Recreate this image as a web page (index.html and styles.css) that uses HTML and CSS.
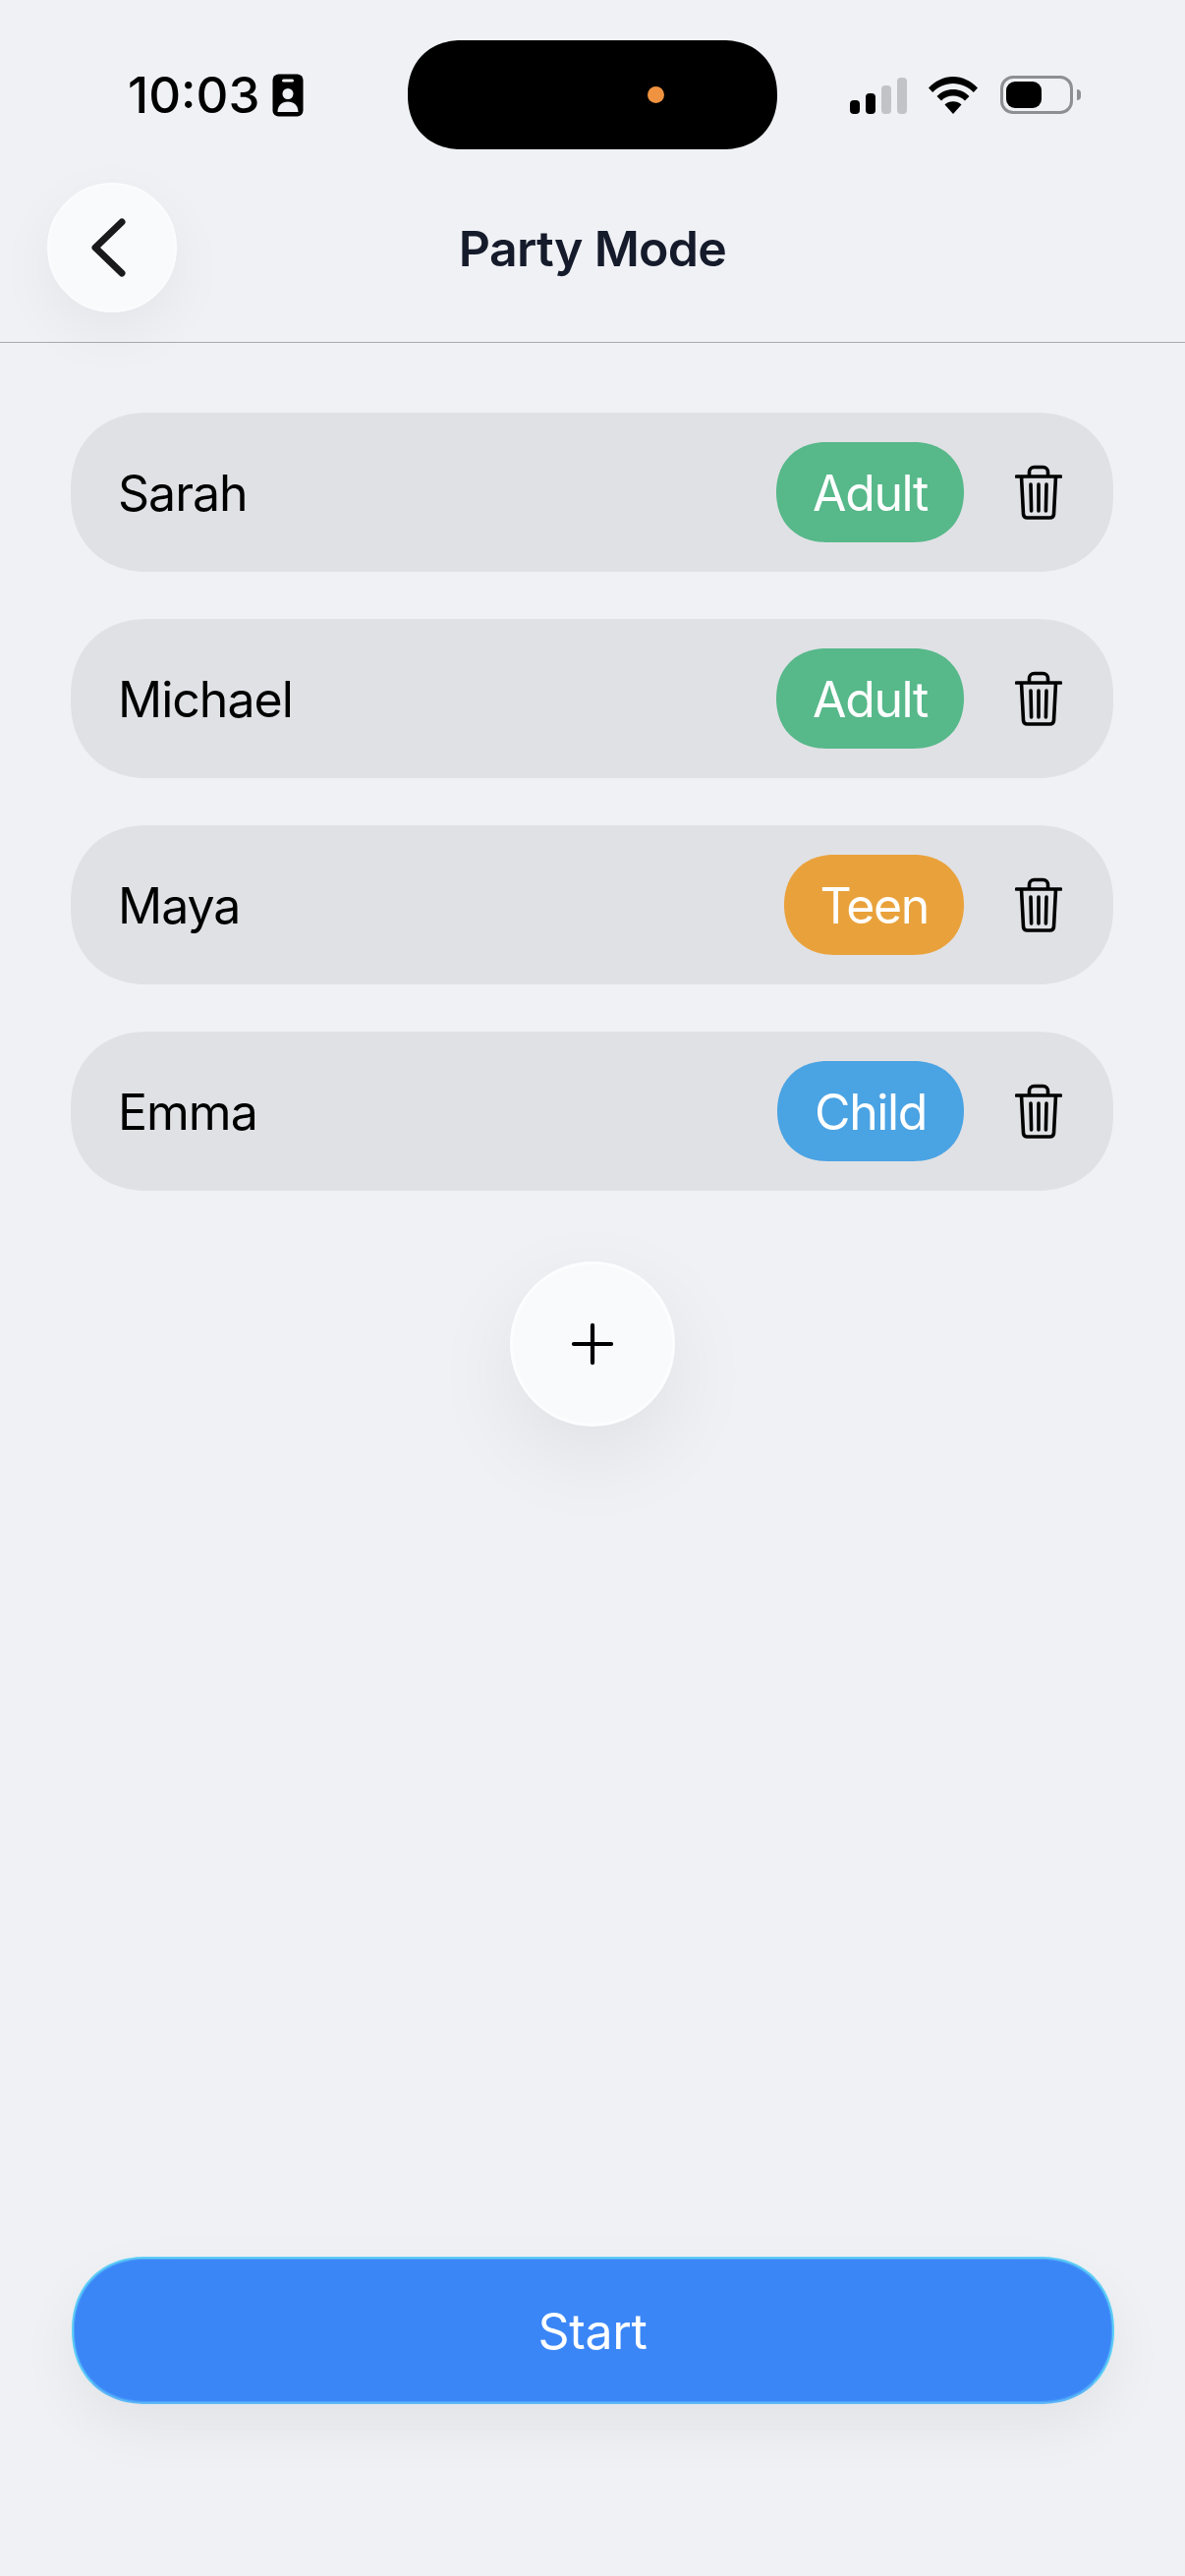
FILE: index.html
```html
<!DOCTYPE html>
<html lang="en">
<head>
    <meta charset="UTF-8">
    <meta name="viewport" content="width=device-width, initial-scale=1.0">
    <title>Party Mode</title>
    <link rel="stylesheet" href="styles.css">
</head>
<body>
    <div class="screen">
        <div class="status-bar">
            <div class="status-left">
                <span class="time">10:03</span>
                <svg class="id-icon" width="32" height="44" viewBox="0 0 32 44">
                    <rect x="0.5" y="0.5" width="31" height="43" rx="6" fill="#000"/>
                    <rect x="10" y="5.500" width="12" height="3" rx="1.500" fill="#eff1f5"/>
                    <circle cx="16" cy="20.500" r="5.500" fill="#eff1f5"/>
                    <path d="M5.500 39c0-6.500 4.500-10.500 10.500-10.500s10.500 4 10.500 10.500z" fill="#eff1f5"/>
                </svg>
            </div>
            <div class="island"><span class="island-dot"></span></div>
            <div class="status-right">
                <div class="signal">
                    <span class="bar bar-1"></span>
                    <span class="bar bar-2"></span>
                    <span class="bar bar-3"></span>
                    <span class="bar bar-4"></span>
                </div>
                <svg class="wifi" width="50" height="38" viewBox="0 0 50 38">
                    <path d="M0 11.500C6.500 4.500 15.500 0 25 0s18.500 4.500 25 11.500L45.800 16C40.500 10.500 33 7 25 7S9.500 10.500 4.200 16z" fill="#000"/>
                    <path d="M8.500 20C12.800 15.500 18.800 13 25 13s12.200 2.500 16.500 7L37 24.500C33.800 21.300 29.500 19.500 25 19.500S16.200 21.300 13 24.500z" fill="#000"/>
                    <path d="M16.500 28.500C18.800 26.500 21.800 25.300 25 25.300s6.200 1.200 8.500 3.200L25 38z" fill="#000"/>
                </svg>
                <div class="battery">
                    <div class="battery-body"><span class="battery-fill"></span></div>
                    <span class="battery-cap"></span>
                </div>
            </div>
        </div>

        <div class="header">
            <div class="header-side">
                <button class="back-btn">
                    <svg width="44" height="64" viewBox="0 0 44 64">
                        <path d="M32 6L5 32l27 26" fill="none" stroke="#1a1a1c" stroke-width="7" stroke-linecap="round" stroke-linejoin="round"/>
                    </svg>
                </button>
            </div>
            <h1 class="title">Party Mode</h1>
            <div class="header-side"></div>
        </div>

        <div class="player-list">
            <div class="player-row">
                <span class="player-name">Sarah</span>
                <span class="badge badge-adult">Adult</span>
                <svg class="trash" width="48" height="56" viewBox="0 0 48 56">
                    <path d="M1.500 12h45M14.500 12V7.500a5 5 0 0 1 5-5h9a5 5 0 0 1 5 5V12M6.500 12l2 38.500a4 4 0 0 0 4 3.500h23a4 4 0 0 0 4-3.500l2-38.500M16 20l.6 27M24 20v27M32 20l-.6 27" fill="none" stroke="#000" stroke-width="3.600" stroke-linecap="round" stroke-linejoin="round"/>
                </svg>
            </div>
            <div class="player-row">
                <span class="player-name">Michael</span>
                <span class="badge badge-adult">Adult</span>
                <svg class="trash" width="48" height="56" viewBox="0 0 48 56">
                    <path d="M1.500 12h45M14.500 12V7.500a5 5 0 0 1 5-5h9a5 5 0 0 1 5 5V12M6.500 12l2 38.500a4 4 0 0 0 4 3.500h23a4 4 0 0 0 4-3.500l2-38.500M16 20l.6 27M24 20v27M32 20l-.6 27" fill="none" stroke="#000" stroke-width="3.600" stroke-linecap="round" stroke-linejoin="round"/>
                </svg>
            </div>
            <div class="player-row">
                <span class="player-name">Maya</span>
                <span class="badge badge-teen">Teen</span>
                <svg class="trash" width="48" height="56" viewBox="0 0 48 56">
                    <path d="M1.500 12h45M14.500 12V7.500a5 5 0 0 1 5-5h9a5 5 0 0 1 5 5V12M6.500 12l2 38.500a4 4 0 0 0 4 3.500h23a4 4 0 0 0 4-3.500l2-38.500M16 20l.6 27M24 20v27M32 20l-.6 27" fill="none" stroke="#000" stroke-width="3.600" stroke-linecap="round" stroke-linejoin="round"/>
                </svg>
            </div>
            <div class="player-row">
                <span class="player-name">Emma</span>
                <span class="badge badge-child">Child</span>
                <svg class="trash" width="48" height="56" viewBox="0 0 48 56">
                    <path d="M1.500 12h45M14.500 12V7.500a5 5 0 0 1 5-5h9a5 5 0 0 1 5 5V12M6.500 12l2 38.500a4 4 0 0 0 4 3.500h23a4 4 0 0 0 4-3.500l2-38.500M16 20l.6 27M24 20v27M32 20l-.6 27" fill="none" stroke="#000" stroke-width="3.600" stroke-linecap="round" stroke-linejoin="round"/>
                </svg>
            </div>
        </div>

        <button class="add-btn">
            <svg width="42" height="42" viewBox="0 0 42 42">
                <path d="M21 2v38M2 21h38" fill="none" stroke="#000" stroke-width="4.200" stroke-linecap="round"/>
            </svg>
        </button>

        <button class="start-btn">Start</button>
    </div>
</body>
</html>
```

FILE: styles.css
```css
* {
    box-sizing: border-box;
}
body {
    margin: 0;
    background-color: #eff1f5;
    font-family: 'Inter', 'Liberation Sans', sans-serif;
}
button {
    font-family: inherit;
    cursor: pointer;
}
.screen {
    display: flex;
    flex-direction: column;
    height: 2622px;
    overflow: hidden;
}

/* status bar */
.status-bar {
    display: grid;
    grid-template-columns: 415px 376px 1fr;
    align-items: center;
    padding-top: 41px;
    height: 152px;
}
.status-left {
    display: flex;
    align-items: center;
    gap: 13px;
    padding-left: 130px;
}
.time {
    font-size: 51px;
    font-weight: 500;
    line-height: 1;
    color: #000;
}
.island {
    display: flex;
    align-items: center;
    height: 111px;
    padding-left: 244px;
    background: #000;
    border-radius: 55px;
    corner-shape: superellipse(1.12);
}
.island-dot {
    width: 17px;
    height: 17px;
    border-radius: 50%;
    background: #f09340;
}
.status-right {
    display: flex;
    align-items: flex-end;
    height: 38px;
    padding-left: 74px;
}
.signal {
    display: flex;
    align-items: flex-end;
    gap: 6px;
    height: 37px;
    margin-right: 22px;
}
.bar {
    width: 10px;
    border-radius: 4px;
    background: #000;
}
.bar-1 { height: 14px; }
.bar-2 { height: 21px; }
.bar-3 { height: 29px; background: #c2c3c6; }
.bar-4 { height: 37px; background: #c2c3c6; }
.wifi {
    margin-right: 23px;
}
.battery {
    display: flex;
    align-items: center;
    gap: 4px;
}
.battery-body {
    width: 74px;
    height: 39px;
    padding: 3px;
    border: 3px solid #8e8f92;
    border-radius: 13px;
}
.battery-fill {
    display: block;
    width: 36px;
    height: 27px;
    border-radius: 9px;
    background: #000;
}
.battery-cap {
    width: 4px;
    height: 11px;
    border-radius: 0 4px 4px 0;
    background: #8e8f92;
}

/* header */
.header {
    display: grid;
    grid-template-columns: 1fr auto 1fr;
    align-items: center;
    padding: 34px 48px 30px;
    border-bottom: 1px solid #aaabae;
}
.back-btn {
    display: flex;
    align-items: center;
    justify-content: center;
    width: 132px;
    height: 132px;
    padding: 0;
    background: #f9fafc;
    border: 2px solid #fbfcfd;
    border-radius: 50%;
    box-shadow: 0 20px 60px rgba(0, 0, 0, 0.05);
}
.title {
    margin: 0;
    padding-top: 2px;
    font-size: 50px;
    font-weight: 600;
    letter-spacing: -0.7px;
    color: #151b2a;
}

/* players */
.player-list {
    display: flex;
    flex-direction: column;
    gap: 48px;
    padding: 71px 73px 0 72px;
}
.player-row {
    display: flex;
    align-items: center;
    height: 162px;
    padding: 0 52px 0 48px;
    background: #e0e1e5;
    border-radius: 78px;
    corner-shape: superellipse(1.12);
}
.player-name {
    flex: 1;
    padding-top: 2px;
    font-size: 50px;
    letter-spacing: -1px;
    color: #000;
}
.badge {
    padding: 2px 37px 0;
    height: 102px;
    line-height: 100px;
    font-size: 50px;
    letter-spacing: -1.4px;
    color: #fff;
    border-radius: 51px;
    corner-shape: superellipse(1.12);
}
.badge-adult { background: #57b88a; }
.badge-teen { background: #e9a23b; padding: 2px 36px 0; }
.badge-child { background: #4aa3e3; padding: 2px 38px 0; }
.trash {
    flex-shrink: 0;
    margin-left: 52px;
}

/* actions */
.add-btn {
    display: flex;
    align-items: center;
    justify-content: center;
    align-self: center;
    width: 168px;
    height: 168px;
    margin-top: 72px;
    padding: 0;
    background: #f9fafc;
    border: 3px solid #fcfdfe;
    border-radius: 50%;
    box-shadow: 0 30px 90px rgba(0, 0, 0, 0.07);
}
.start-btn {
    align-self: center;
    width: 1061px;
    height: 150px;
    margin-top: auto;
    margin-bottom: 175px;
    padding: 2px 0 0;
    font-size: 50px;
    letter-spacing: -0.3px;
    color: #fff;
    background: #3b86f7;
    border: 2px solid #5ccdf6;
    border-bottom-color: #5cb8f8;
    border-radius: 75px;
    corner-shape: superellipse(1.12);
    box-shadow: inset 0 0 0 1px #4b9ff9, 0 24px 60px rgba(0, 0, 0, 0.06);
}
```
